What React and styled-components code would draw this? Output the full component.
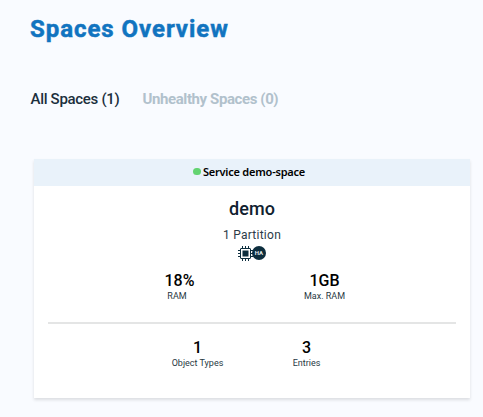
import React from "react";
import styled, { createGlobalStyle } from "styled-components";

const GlobalStyle = createGlobalStyle`
  * { box-sizing: border-box; }
  body { margin: 0; background: #f9fbff; font-family: Roboto, sans-serif; }
`;

const Page = styled.main`
  height: 417px;
  padding: 12px 13px 0 30px;
  overflow: hidden;
`;

const Title = styled.h1`
  margin: 0;
  height: 34px;
  font: 700 24px/34px Roboto, sans-serif;
  letter-spacing: 0.95px;
  -webkit-text-stroke: 0.5px #1174c0;
  color: #1174c0;
  white-space: nowrap;
`;

const Tabs = styled.nav`
  display: flex;
  gap: 23px;
  margin: 43px 0 0 0.5px;
  height: 20px;
`;

const Tab = styled.a`
  font-size: 15px;
  line-height: 20px;
  font-weight: ${(p) => (p.$active ? 500 : 700)};
  letter-spacing: ${(p) => p.$spacing};
  color: ${(p) => (p.$active ? "#1c2f3d" : "#b1c1cc")};
  white-space: nowrap;
`;

const Card = styled.section`
  width: 436px;
  height: 239px;
  margin: 50px 0 0 4px;
  display: flex;
  flex-direction: column;
  align-items: center;
  background: #fff;
  box-shadow: 0 2px 3px rgba(0, 0, 0, 0.12);
`;

const CardHeader = styled.header`
  width: 100%;
  height: 27px;
  display: flex;
  align-items: center;
  justify-content: center;
  gap: 2px;
  padding-right: 6px;
  background: #e9f2fa;
  font: 600 11px/25px "Noto Sans", sans-serif;
  letter-spacing: -0.22px;
  color: #000;
  padding-bottom: 2px;
`;

const StatusDot = styled.span`
  width: 8px;
  height: 7px;
  border-radius: 3.5px;
  background: #63d471;
`;

const SpaceName = styled.h2`
  margin: 11px 0 0;
  font-size: 18px;
  line-height: 24px;
  font-weight: 500;
  letter-spacing: 0.1px;
  color: #10212f;
`;

const Partitions = styled.div`
  margin-top: 6px;
  font-size: 12px;
  line-height: 16px;
  letter-spacing: 0.25px;
  color: #2b3b48;
`;

const Icons = styled.div`
  display: flex;
  height: 15px;
  margin-top: 3px;
`;

const Stats = styled.div`
  display: flex;
  justify-content: center;
  width: 100%;
  gap: ${(p) => p.$gap};
  margin-top: ${(p) => p.$top};
`;

const Stat = styled.div`
  width: 70px;
  display: flex;
  flex-direction: column;
  align-items: center;
`;

const Value = styled.div`
  font-size: 16px;
  line-height: 18px;
  font-weight: 500;
  color: #000;
`;

const Label = styled.div`
  margin-top: 1px;
  font-size: 9px;
  line-height: 11px;
  margin-right: ${(p) => p.$shift || "0"};
  color: #293943;
  white-space: nowrap;
`;

const Divider = styled.hr`
  width: 408px;
  height: 2px;
  margin: 20px 0 0;
  border: 0;
  flex: none;
  background: #e4e5e5;
`;

const ChipIcon = () => (
  <svg width="15" height="15" viewBox="0 0 15 15" fill="none" stroke="#0d2e3e">
    <path d="M4.5 0v3M7.5 0v3M10.5 0v3M4.5 12v3M7.5 12v3M10.5 12v3M0 4.5h3M0 7.5h3M0 10.5h3M12 4.5h3M12 7.5h3M12 10.5h3" />
    <rect x="2.5" y="2.5" width="10" height="10" rx="0.5" />
    <rect x="4.5" y="4.5" width="6" height="6" fill="#0d2e3e" stroke="none" />
  </svg>
);

const AvailabilityBadge = styled.span`
  width: 14px;
  height: 14px;
  margin-left: -1px;
  display: flex;
  align-items: center;
  justify-content: center;
  border-radius: 50%;
  background: #0d2e3e;
  color: #e4ebee;
  font-size: 6px;
  line-height: 14px;
  font-weight: 700;
`;

export default function App() {
  return (
    <>
      <GlobalStyle />
      <Page>
        <Title>Spaces Overview</Title>
        <Tabs>
          <Tab $active $spacing="-0.3px">All Spaces (1)</Tab>
          <Tab $spacing="-0.4px">Unhealthy Spaces (0)</Tab>
        </Tabs>
        <Card>
          <CardHeader><StatusDot />Service demo-space</CardHeader>
          <SpaceName>demo</SpaceName>
          <Partitions>1 Partition</Partitions>
          <Icons><ChipIcon /><AvailabilityBadge>HA</AvailabilityBadge></Icons>
          <Stats $gap="75px" $top="11px">
            <Stat><Value>18%</Value><Label $shift="5px">RAM</Label></Stat>
            <Stat><Value>1GB</Value><Label>Max. RAM</Label></Stat>
          </Stats>
          <Divider />
          <Stats $gap="39px" $top="15px">
            <Stat><Value>1</Value><Label>Object Types</Label></Stat>
            <Stat><Value>3</Value><Label>Entries</Label></Stat>
          </Stats>
        </Card>
      </Page>
    </>
  );
}
